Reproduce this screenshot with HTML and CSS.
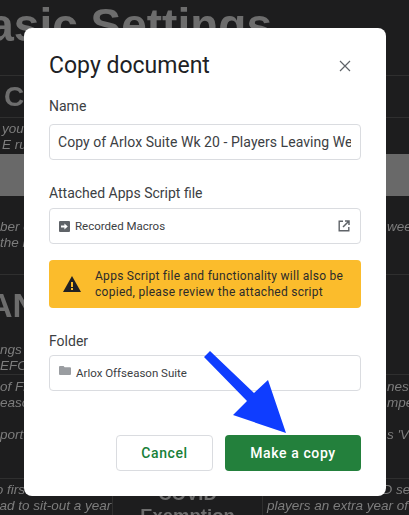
FILE: index.html
```html
<!DOCTYPE html>
<html lang="en">
<head>
<meta charset="utf-8">
<title>Copy document</title>
<link rel="stylesheet" href="styles.css">
</head>
<body>
<div class="sheet">
  <div class="row r-title"><h1 class="big">Basic Settings</h1></div>
  <div class="row r-sub"><span class="head">C</span></div>
  <div class="row r-note1"><p class="note">you<br>E run</p><p class="note"></p></div>
  <div class="band"></div>
  <div class="row r-note2"><p class="note">ber c<br>the l</p><p class="note right">ween</p></div>
  <div class="row r-an"><span class="head an">AN</span></div>
  <div class="row r-note3"><p class="note">ngs<br>EFOR</p></div>
  <div class="row r-note4"><p class="note">of Fr<br>easo</p><p class="note right">nes<br>mpe</p></div>
  <div class="row r-note5"><p class="note">port</p><p class="note right">s 'Vi</p></div>
  <div class="grid-last">
    <p class="note last"><span class="shift">to first<br>had to sit-out a year</span></p>
    <p class="covid">COVID<br>Exemption</p>
    <p class="note last">Because of a COVID se<br>players an extra year of</p>
  </div>
</div>

<div class="dialog">
  <div class="dialog-head">
    <h2 class="title">Copy document</h2>
    <svg class="close" viewBox="0 0 12 12"><path d="M1 1l10 10M11 1L1 11"/></svg>
  </div>
  <label class="label l-name">Name</label>
  <div class="field f-name"><span class="clip">Copy of Arlox Suite Wk 20 - Players Leaving Week</span></div>
  <label class="label l-script">Attached Apps Script file</label>
  <div class="field f-small">
    <svg class="ic" viewBox="0 0 11 11"><rect width="11" height="11" rx="1" fill="#5f6368"/><path d="M2 4.4h3.4V2.4L8.8 5.5 5.4 8.6V6.6H2z" fill="#fff"/></svg>
    <span class="small grow">Recorded Macros</span>
    <svg class="ic ext" viewBox="0 0 12 12"><path d="M5 1.2H1.2v9.6h9.6V7" fill="none" stroke="#5f6368" stroke-width="1.4"/><path d="M7 1h4v4M11 1L5 7" fill="none" stroke="#5f6368" stroke-width="1.5"/></svg>
  </div>
  <div class="warn">
    <svg class="warn-ic" viewBox="0 0 18 16"><path fill-rule="evenodd" d="M9 0l9 16H0zM8 6v5h2V6zM8 12v2h2v-2z" fill="#202124"/></svg>
    <span>Apps Script file and functionality will also be<br>copied, please review the attached script</span>
  </div>
  <label class="label l-folder">Folder</label>
  <div class="field f-small">
    <svg class="ic folder" viewBox="0 0 12 9"><path d="M1 0h3.6l1 1.2H11a1 1 0 0 1 1 1V8a1 1 0 0 1-1 1H1a1 1 0 0 1-1-1V1a1 1 0 0 1 1-1z" fill="#9a9da1"/></svg>
    <span class="small">Arlox Offseason Suite</span>
  </div>
  <div class="actions">
    <button class="btn cancel">Cancel</button>
    <button class="btn primary">Make a copy</button>
  </div>
</div>

<svg class="arrow" viewBox="0 0 409 515"><polygon points="210,351 254,393 268,380 286,433 233,415 247,401 204,357" fill="#0f3dff"/></svg>
</body>
</html>
```
FILE: styles.css
```css
* { box-sizing: border-box; }
html, body { margin: 0; padding: 0; }
body {
  width: 409px;
  height: 515px;
  overflow: hidden;
  position: relative;
  background: #1d1d1e;
  font-family: Roboto, "Liberation Sans", sans-serif;
}
.sheet {
  width: 409px;
  height: 515px;
  overflow: hidden;
  display: flex;
  flex-direction: column;
  font-family: "Liberation Sans", Arial, sans-serif;
  color: #7d7d7d;
  filter: blur(.3px);
}
.row {
  display: flex;
  justify-content: space-between;
  flex: none;
  border-bottom: 1px solid #2f2f2f;
  overflow: hidden;
}
.big {
  margin: 0 0 0 -45px;
  font-size: 46px;
  line-height: 50px;
  padding-top: 0;
  font-weight: 700;
  color: #6d6d6d;
  white-space: nowrap;
}
.head { font-weight: 700; color: #6d6d6d; font-size: 28px; line-height: 32px; padding-left: 4px; }
.an { font-size: 34px; line-height: 38px; padding-left: 0; margin-left: -12px; }
.note {
  margin: 0;
  font-style: italic;
  font-size: 13.5px;
  line-height: 16px;
  color: #7d7d7d;
  white-space: nowrap;
}
.right { width: 23px; overflow: hidden; flex: none; direction: ltr; padding-left: 1px; }
.r-title { height: 76px; }
.r-sub { height: 42px; padding-top: 5px; }
.r-note1 { height: 36px; padding-top: 3px; padding-left: 2px; border: 0; }
.band { height: 42px; background: #696969; flex: none; }
.r-note2 { height: 79px; padding-top: 23px; }
.r-an { height: 61px; padding-top: 11px; border: 0; }
.r-note3 { height: 39px; padding-top: 6px; padding-left: 0; }
.r-note4 { height: 40px; padding-top: 4px; border: 0; }
.r-note5 { height: 64px; padding-top: 12px; }
.grid-last {
  display: grid;
  grid-template-columns: 113px 150px 146px;
  flex: 1;
}
.grid-last > * { margin: 0; border-right: 1px solid #2f2f2f; overflow: hidden; }
.grid-last > :last-child { border-right: 0; }
.note.last { padding-top: 3px; }
.grid-last > .note:last-child { padding-left: 4px; }
.shift { display: block; margin-left: -8px; }
.covid {
  font-weight: 700;
  font-size: 18.5px;
  line-height: 22px;
  text-align: center;
  color: #6d6d6d;
  padding-top: 4px;
}

.dialog {
  position: absolute;
  left: 24px;
  top: 28px;
  width: 362px;
  height: 468px;
  background: #fff;
  border-radius: 8px;
  padding: 0 25px;
  display: flex;
  flex-direction: column;
  color: #3c4043;
}
.dialog-head {
  display: flex;
  align-items: center;
  justify-content: space-between;
  height: 24px;
  margin-top: 26px;
  padding-right: 10px;
}
.title { margin: 0; font-size: 23px; font-weight: 400; color: #202124; line-height: 24px; }
.close { width: 12px; height: 12px; stroke: #5f6368; stroke-width: 1.2; fill: none; }
.label { font-size: 14px; line-height: 16px; color: #3c4043; }
.l-name { margin-top: 20px; }
.l-script { margin-top: 25px; }
.l-folder { margin-top: 25px; }
.field {
  border: 1px solid #dadce0;
  border-radius: 4px;
  height: 36px;
  display: flex;
  align-items: center;
  padding: 0 10px 0 9px;
  flex: none;
}
.f-name { margin-top: 10px; padding: 0 9px 0 8px; font-size: 14px; letter-spacing: .06px; color: #3c4043; }
.l-script + .field { margin-top: 7px; }
.l-folder + .field { margin-top: 6px; }
.clip { overflow: hidden; white-space: nowrap; flex: 1; }
.ic { width: 11px; height: 11px; flex: none; margin-right: 5px; }
.ext { margin-right: 0; width: 12px; height: 12px; }
.folder { width: 12px; height: 9px; margin-right: 5px; margin-top: -5px; }
.small { font-size: 11.5px; letter-spacing: 0; color: #3c4043; }
.grow { flex: 1; margin-top: -1px; }
.warn {
  margin-top: 16px;
  height: 48px;
  flex: none;
  background: #fbbc2c;
  border-radius: 4px;
  display: flex;
  align-items: center;
  padding: 0 14px;
  gap: 14px;
  font-size: 12px;
  line-height: 16px;
  letter-spacing: .28px;
  white-space: nowrap;
  color: #2b2b2b;
}
.warn-ic { width: 18px; height: 16px; flex: none; }
.actions {
  margin-top: 44px;
  display: flex;
  justify-content: flex-end;
  gap: 12px;
}
.btn {
  height: 36px;
  border-radius: 4px;
  font-family: Roboto, "Liberation Sans", sans-serif;
  font-size: 14px;
  font-weight: 500;
  letter-spacing: .6px;
  padding: 0;
}
.cancel { width: 97px; background: #fff; border: 1px solid #dadce0; color: #188038; }
.primary { width: 136px; background: #23803c; border: 0; color: #fff; }
.arrow {
  position: absolute;
  left: 0;
  top: 0;
  width: 409px;
  height: 515px;
  pointer-events: none;
}
```
